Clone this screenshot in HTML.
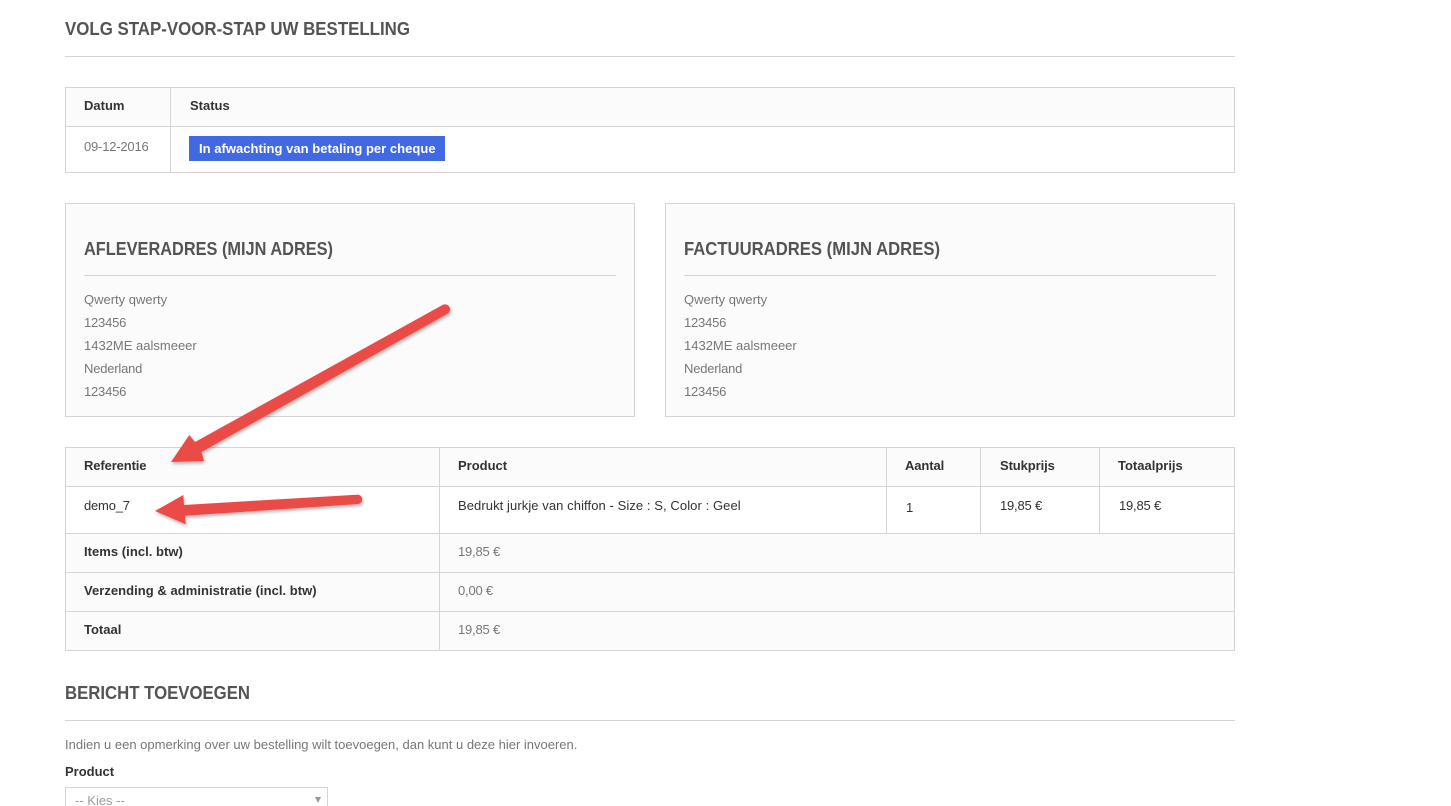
<!DOCTYPE html>
<html><head><meta charset="utf-8"><title>Bestelling</title>
<style>
html,body{margin:0;padding:0;background:#fff;width:1451px;height:806px;overflow:hidden}
body{position:relative;font:13px "Liberation Sans",Arial,sans-serif;color:#777}
.a{position:absolute;box-sizing:border-box}
.l{position:absolute;background:#d6d4d4}
.t{position:absolute;white-space:nowrap;line-height:18px}
.n{letter-spacing:-.2px}
.b{font-weight:bold;color:#333;letter-spacing:0}
.d{color:#333}
svg{position:absolute;left:0;top:0}
.h{font-family:"Liberation Sans",sans-serif;font-weight:bold;fill:#555454;font-size:18px}
</style></head><body>
<div class="l" style="left:65px;top:56px;width:1170px;height:1px"></div>

<div class="a" style="left:65px;top:87px;width:1170px;height:86px;border:1px solid #d6d4d4;background:#fff"></div>
<div class="a" style="left:66px;top:88px;width:1168px;height:38px;background:#fbfbfb"></div>
<div class="l" style="left:66px;top:126px;width:1168px;height:1px"></div>
<div class="l" style="left:170px;top:88px;width:1px;height:84px"></div>
<div class="t b" style="left:84px;top:97px">Datum</div>
<div class="t b" style="left:190px;top:97px">Status</div>
<div class="t n" style="left:84px;top:138px">09-12-2016</div>
<div class="a" style="left:189px;top:136px;width:256px;height:25px;background:#4169e1"></div>
<div class="t" style="left:199px;top:140px;color:#fff;font-weight:bold;letter-spacing:.03px">In afwachting van betaling per cheque</div>

<div class="a" style="left:65px;top:203px;width:570px;height:214px;border:1px solid #d6d4d4;background:#fbfbfb"></div>
<div class="a" style="left:665px;top:203px;width:570px;height:214px;border:1px solid #d6d4d4;background:#fbfbfb"></div>
<div class="l" style="left:84px;top:275px;width:532px;height:1px"></div>
<div class="l" style="left:684px;top:275px;width:532px;height:1px"></div>
<div class="t" style="left:84px;top:291px">Qwerty qwerty</div>
<div class="t n" style="left:84px;top:314px">123456</div>
<div class="t" style="left:84px;top:337px">1432ME aalsmeeer</div>
<div class="t n" style="left:84px;top:360px">Nederland</div>
<div class="t n" style="left:84px;top:383px">123456</div>
<div class="t" style="left:684px;top:291px">Qwerty qwerty</div>
<div class="t n" style="left:684px;top:314px">123456</div>
<div class="t" style="left:684px;top:337px">1432ME aalsmeeer</div>
<div class="t n" style="left:684px;top:360px">Nederland</div>
<div class="t n" style="left:684px;top:383px">123456</div>

<div class="a" style="left:65px;top:447px;width:1170px;height:204px;border:1px solid #d6d4d4;background:#fbfbfb"></div>
<div class="a" style="left:66px;top:487px;width:1168px;height:46px;background:#fff"></div>
<div class="l" style="left:66px;top:486px;width:1168px;height:1px"></div>
<div class="l" style="left:66px;top:533px;width:1168px;height:1px"></div>
<div class="l" style="left:66px;top:572px;width:1168px;height:1px"></div>
<div class="l" style="left:66px;top:611px;width:1168px;height:1px"></div>
<div class="l" style="left:439px;top:448px;width:1px;height:202px"></div>
<div class="l" style="left:886px;top:448px;width:1px;height:85px"></div>
<div class="l" style="left:980px;top:448px;width:1px;height:85px"></div>
<div class="l" style="left:1099px;top:448px;width:1px;height:85px"></div>
<div class="t b" style="left:84px;top:457px;letter-spacing:-.12px">Referentie</div>
<div class="t b" style="left:458px;top:457px">Product</div>
<div class="t b" style="left:905px;top:457px;letter-spacing:-.1px">Aantal</div>
<div class="t b" style="left:1000px;top:457px;letter-spacing:-.1px">Stukprijs</div>
<div class="t b" style="left:1118px;top:457px">Totaalprijs</div>
<div class="t d n" style="left:84px;top:497px">demo_7</div>
<div class="t d" style="left:458px;top:497px;letter-spacing:.08px">Bedrukt jurkje van chiffon - Size : S, Color : Geel</div>
<div class="t d" style="left:906px;top:499px">1</div>
<div class="t d n" style="left:1000px;top:497px">19,85 €</div>
<div class="t d n" style="left:1119px;top:497px">19,85 €</div>
<div class="t b" style="left:84px;top:543px;letter-spacing:.04px">Items (incl. btw)</div>
<div class="t n" style="left:458px;top:543px">19,85 €</div>
<div class="t b" style="left:84px;top:582px;letter-spacing:.04px">Verzending &amp; administratie (incl. btw)</div>
<div class="t n" style="left:458px;top:582px">0,00 €</div>
<div class="t b" style="left:84px;top:621px">Totaal</div>
<div class="t n" style="left:458px;top:621px">19,85 €</div>

<div class="l" style="left:65px;top:720px;width:1170px;height:1px"></div>
<div class="t" style="left:65px;top:736px">Indien u een opmerking over uw bestelling wilt toevoegen, dan kunt u deze hier invoeren.</div>
<div class="t b" style="left:65px;top:763px">Product</div>
<div class="a" style="left:65px;top:787px;width:263px;height:19px;border:1px solid #d6d4d4;border-bottom:0;background:#fff"></div>
<div class="t" style="left:75px;top:792px;color:#9c9b9b;height:14px;overflow:hidden">-- Kies --</div>

<svg width="1451" height="806" viewBox="0 0 1451 806">
<defs><filter id="s" x="-10%" y="-20%" width="120%" height="140%"><feDropShadow dx="1" dy="2" stdDeviation="1.500" flood-color="#000" flood-opacity=".3"/></filter></defs>
<text class="h" x="65" y="35" textLength="345" lengthAdjust="spacingAndGlyphs">VOLG STAP-VOOR-STAP UW BESTELLING</text>
<text class="h" x="84" y="255" textLength="249" lengthAdjust="spacingAndGlyphs">AFLEVERADRES (MIJN ADRES)</text>
<text class="h" x="684" y="255" textLength="256" lengthAdjust="spacingAndGlyphs">FACTUURADRES (MIJN ADRES)</text>
<text class="h" x="65" y="699" textLength="185" lengthAdjust="spacingAndGlyphs">BERICHT TOEVOEGEN</text>
<path d="M315 797h6l-3 6z" fill="#9a9a9a"/>
<g fill="#ea4c46" filter="url(#s)">
<path d="M442.500 305A5 5 0 0 1 447.500 313.700L201.500 452L204 461L171 462L189.300 435L195 442Z"/>
<path d="M356.700 494.700A4.700 4.700 0 0 1 358.300 504L185 515.700L185.700 524.300L155 511L183.300 495L184 505Z"/>
</g>
</svg>
</body></html>
